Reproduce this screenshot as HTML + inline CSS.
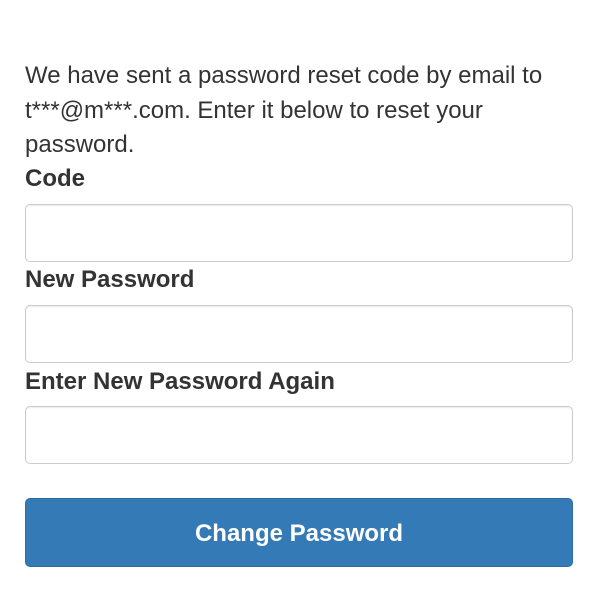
<!DOCTYPE html>
<html><head><style>
body{margin:0;background:#fff;font-family:"Liberation Sans",Arial,sans-serif;color:#333;width:596px;height:592px;overflow:hidden}
p{position:absolute;left:25px;top:59px;margin:0;font-size:24px;line-height:34.5px;width:548px}
.l{position:absolute;left:25px;font-size:24px;font-weight:bold;line-height:26px}
.i{position:absolute;left:25px;width:546px;height:56px;border:1px solid #ccc;border-radius:5px;box-shadow:inset 0 1px 1px rgba(0,0,0,.075)}
.b{position:absolute;left:25px;top:498px;width:546px;height:67px;background:#337ab7;border:1px solid #2e6da4;border-radius:5px;color:#fff;font-weight:bold;font-size:24px;text-align:center;line-height:69px}
</style></head><body>
<p>We have sent a password reset code by email to t***@m***.com. Enter it below to reset your password.</p>
<div class="l" style="top:166px">Code</div>
<div class="i" style="top:204px"></div>
<div class="l" style="top:267px">New Password</div>
<div class="i" style="top:305px"></div>
<div class="l" style="top:369px">Enter New Password Again</div>
<div class="i" style="top:406px"></div>
<div class="b">Change Password</div>
</body></html>
